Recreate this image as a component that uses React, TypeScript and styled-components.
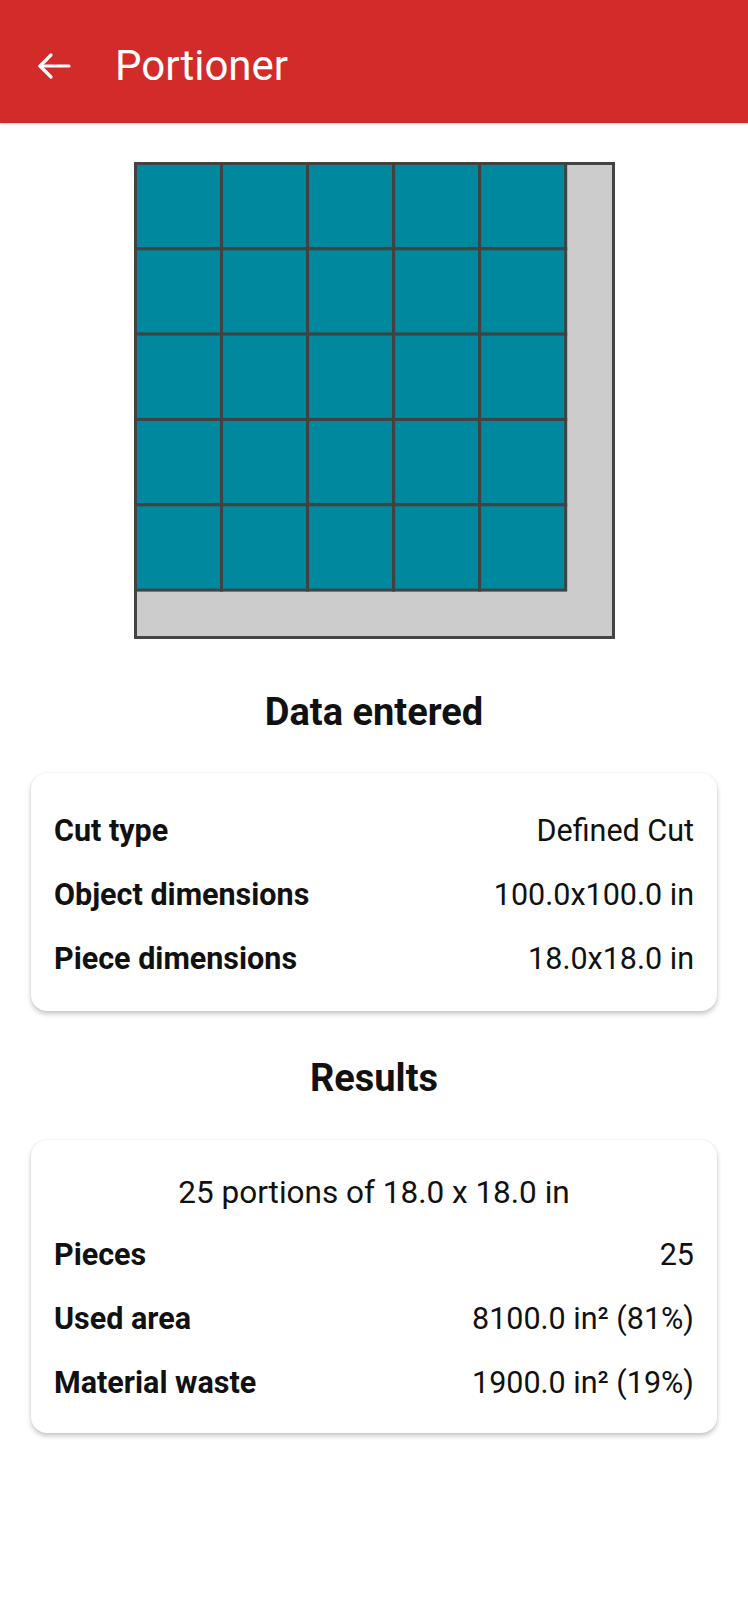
import React from "react";
import styled, { createGlobalStyle } from "styled-components";

const GlobalStyle = createGlobalStyle`
  html, body { margin: 0; padding: 0; background: #ffffff; }
  body { font-family: Roboto, "Noto Sans", Arial, sans-serif; color: #111; }
  * { box-sizing: border-box; }
`;

const Page = styled.div`
  width: 748px;
  min-height: 1600px;
  background: #ffffff;
  display: flex;
  flex-direction: column;
`;

const Header = styled.header`
  height: 123px;
  background: #d32a2a;
  display: flex;
  align-items: center;
  padding: 8px 0 0 37px;
  gap: 44px;
  box-shadow: 0 1px 2px rgba(0, 0, 0, 0.2);
`;

const BackButton = styled.button`
  border: none;
  background: transparent;
  padding: 0;
  width: 34px;
  height: 34px;
  display: flex;
  align-items: center;
  justify-content: center;
  color: #ffffff;
  cursor: pointer;
`;

const Title = styled.h1`
  margin: 0;
  font-family: Roboto, sans-serif;
  font-weight: 400;
  font-size: 42px;
  color: #ffffff;
  line-height: 1;
`;

const Content = styled.main`
  display: flex;
  flex-direction: column;
  align-items: center;
  padding: 0 31px;
`;

const Diagram = styled.svg`
  display: block;
  margin-top: 39px;
`;

const SectionTitle = styled.h2<{ $top: number; $bottom: number }>`
  margin: ${(p) => p.$top}px 0 ${(p) => p.$bottom}px;
  font-family: Roboto, sans-serif;
  font-weight: 700;
  font-size: 38px;
  line-height: 40px;
  height: 40px;
  text-align: center;
  color: #111;
`;

const Card = styled.section<{ $pt: number; $pb: number }>`
  width: 100%;
  background: #ffffff;
  border-radius: 16px;
  box-shadow: 0 3px 5px rgba(0, 0, 0, 0.22), 0 0 2px rgba(0, 0, 0, 0.08);
  padding: ${(p) => p.$pt}px 23px ${(p) => p.$pb}px;
  display: flex;
  flex-direction: column;
`;

const Row = styled.div`
  height: 64px;
  display: flex;
  align-items: center;
  justify-content: space-between;
`;

const Label = styled.span`
  font-family: Roboto, sans-serif;
  font-weight: 700;
  font-size: 30.5px;
  color: #111;
`;

const Value = styled.span`
  font-family: Roboto, sans-serif;
  font-weight: 400;
  font-size: 30.5px;
  color: #111;
`;

const Summary = styled.div`
  height: 60px;
  display: flex;
  align-items: center;
  justify-content: center;
  font-family: Roboto, sans-serif;
  font-weight: 400;
  font-size: 31.5px;
  color: #111;
`;

const COLS = 5;
const ROWS = 5;
const OUTER_W = 478;
const OUTER_H = 474;
const CELL_W = OUTER_W * 0.18;
const CELL_H = OUTER_H * 0.18;

function PortionDiagram() {
  const cells = [];
  for (let r = 0; r < ROWS; r++) {
    for (let c = 0; c < COLS; c++) {
      cells.push(
        <rect
          key={`${r}-${c}`}
          x={1.5 + c * CELL_W}
          y={1.5 + r * CELL_H}
          width={CELL_W}
          height={CELL_H}
          fill="#00899e"
          stroke="#424242"
          strokeWidth={3}
        />
      );
    }
  }
  return (
    <Diagram width={481} height={477} viewBox="0 0 481 477">
      <rect x={1.5} y={1.5} width={OUTER_W} height={OUTER_H} fill="#cccccc" stroke="#444444" strokeWidth={3} />
      {cells}
    </Diagram>
  );
}

const dataEntered = [
  ["Cut type", "Defined Cut"],
  ["Object dimensions", "100.0x100.0 in"],
  ["Piece dimensions", "18.0x18.0 in"],
];

const results = [
  ["Pieces", "25"],
  ["Used area", "8100.0 in² (81%)"],
  ["Material waste", "1900.0 in² (19%)"],
];

export default function App() {
  return (
    <>
      <GlobalStyle />
      <Page>
        <Header>
          <BackButton aria-label="Back">
            <svg width="34" height="28" viewBox="0 0 34 28" fill="none" stroke="#ffffff" strokeWidth="3.2" strokeLinecap="round" strokeLinejoin="round">
              <path d="M32 14H3" />
              <path d="M14 3L3 14l11 11" />
            </svg>
          </BackButton>
          <Title>Portioner</Title>
        </Header>
        <Content>
          <PortionDiagram />
          <SectionTitle $top={53} $bottom={41}>Data entered</SectionTitle>
          <Card $pt={25} $pb={21}>
            {dataEntered.map(([l, v]) => (
              <Row key={l}>
                <Label>{l}</Label>
                <Value>{v}</Value>
              </Row>
            ))}
          </Card>
          <SectionTitle $top={47} $bottom={42}>Results</SectionTitle>
          <Card $pt={22} $pb={19}>
            <Summary>25 portions of 18.0 x 18.0 in</Summary>
            {results.map(([l, v]) => (
              <Row key={l}>
                <Label>{l}</Label>
                <Value>{v}</Value>
              </Row>
            ))}
          </Card>
        </Content>
      </Page>
    </>
  );
}
